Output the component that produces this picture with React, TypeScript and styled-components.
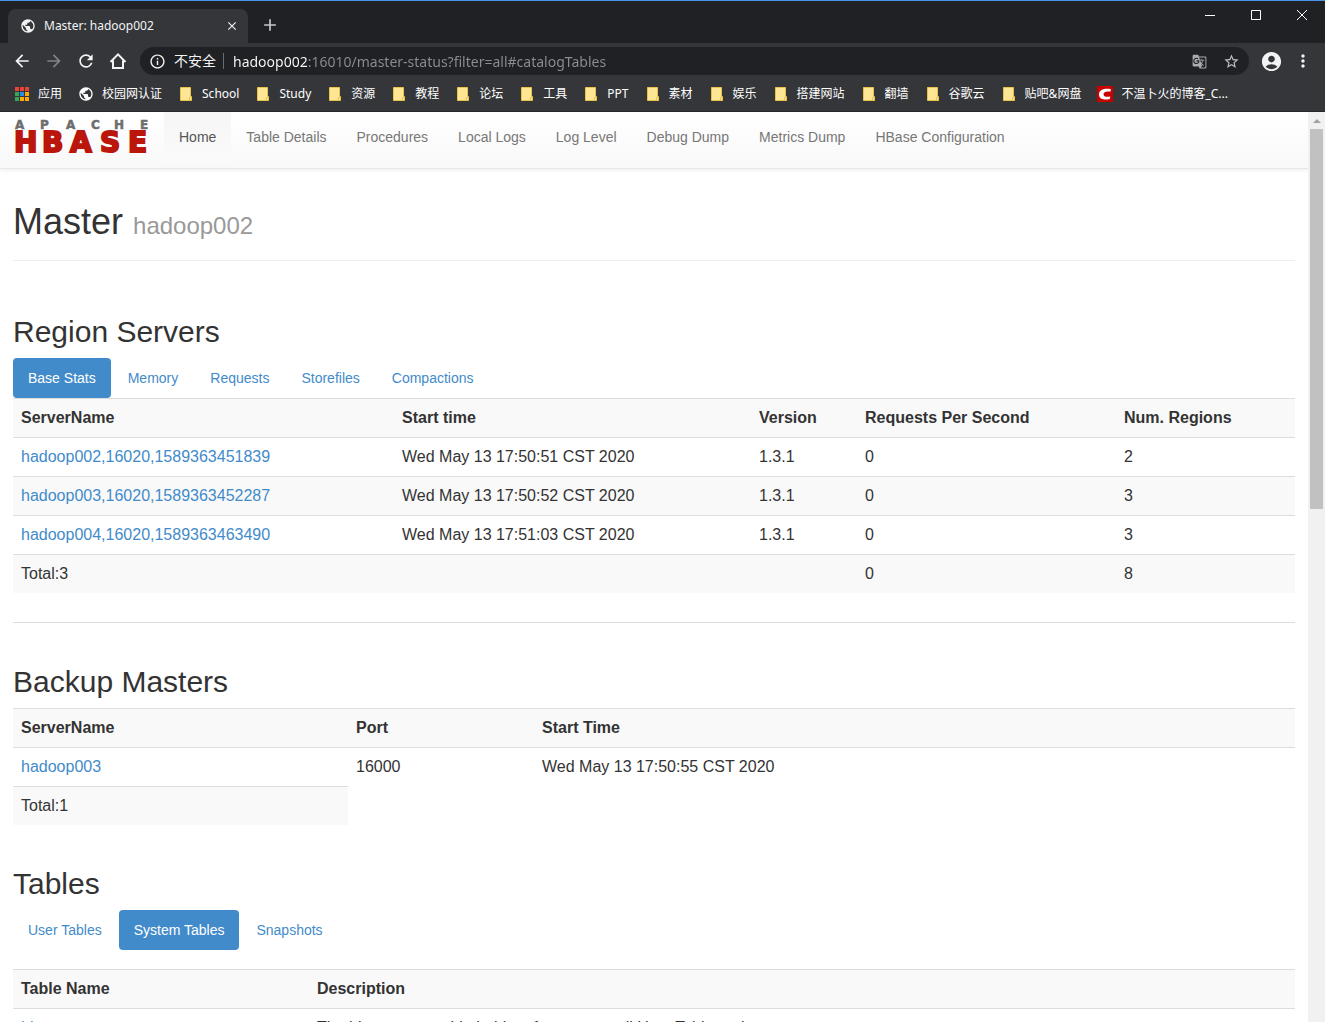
import React from "react";
import styled, { createGlobalStyle } from "styled-components";
import {
  MdAccountCircle,
  MdAdd,
  MdArrowBack,
  MdArrowForward,
  MdClose,
  MdGTranslate,
  MdInfoOutline,
  MdMoreVert,
  MdPublic,
  MdRefresh,
  MdStarBorder,
} from "react-icons/md";

const uiFont = '"Noto Sans", "Noto Sans CJK SC", sans-serif';
const pageFont = '"Liberation Sans", Arial, sans-serif';

const GlobalStyle = createGlobalStyle`
  *, *::before, *::after { box-sizing: border-box; }
  body { margin: 0; background: #fff; }
  button, input { font: inherit; border: 0; padding: 0; margin: 0; background: none; color: inherit; }
  a { text-decoration: none; color: inherit; }
  h1, h2 { margin: 0; font-weight: 400; }
`;

const Window = styled.div`
  display: flex;
  flex-direction: column;
  height: 100vh;
  overflow: hidden;
`;

/* ---------- browser frame ---------- */

const Chrome = styled.header`
  flex: none;
  background: #35363a;
  color: #f1f3f4;
  font-family: ${uiFont};
  font-size: 12px;
  line-height: 16px;
  border-bottom: 1px solid #27282b;
`;

const TabStrip = styled.div`
  display: flex;
  align-items: stretch;
  height: 43px;
  padding: 8px 0 0 8px;
  background: #202124;
  border-top: 1px solid #4a94e8;
`;

const BrowserTab = styled.div`
  display: flex;
  align-items: center;
  width: 240px;
  padding: 0 8px 0 12px;
  gap: 8px;
  background: #35363a;
  border-radius: 8px 8px 0 0;
`;

const TabTitle = styled.span`
  flex: 1;
  white-space: nowrap;
`;

const IconButton = styled.button<{ $size?: number; $tone?: string }>`
  display: grid;
  place-items: center;
  flex: none;
  width: ${(p) => p.$size ?? 32}px;
  height: ${(p) => p.$size ?? 32}px;
  color: ${(p) => p.$tone ?? "#f1f3f4"};
`;

const NewTab = styled(IconButton)`
  margin-left: 6px;
`;

const WindowControls = styled.div`
  display: flex;
  margin: -8px 0 0 auto;
`;

const WindowButton = styled.button`
  display: grid;
  place-items: center;
  width: 46px;
  height: 28px;
  color: #fff;
`;

const Toolbar = styled.div`
  display: flex;
  align-items: center;
  height: 36px;
  padding: 0 6px;
`;

const Omnibox = styled.div`
  display: flex;
  align-items: center;
  flex: 1;
  height: 28px;
  margin: 0 6px;
  padding: 0 2px 0 8px;
  border-radius: 14px;
  background: #202124;
  font-size: 14px;
`;

const SiteInfo = styled.button`
  display: flex;
  align-items: center;
  gap: 8px;
  height: 16px;
  padding: 0 7px 0 1px;
  border-right: 1px solid #6b6d70;
  color: #f1f3f4;
  white-space: nowrap;
`;

const Address = styled.input`
  flex: 1;
  min-width: 0;
  height: 24px;
  margin-left: 9px;
  color: transparent;
  background: linear-gradient(to right, #fff 75px, #8b8e92 75px);
  background-clip: text;
  -webkit-background-clip: text;
`;

const Bookmarks = styled.nav`
  display: flex;
  align-items: center;
  gap: 16px;
  height: 32px;
  padding: 0 14px 2px;
  white-space: nowrap;
`;

const Bookmark = styled.a`
  display: flex;
  align-items: center;
  gap: 8px;
  color: #fff;

  svg { flex: none; }
`;

/* ---------- page ---------- */

const Viewport = styled.div`
  display: flex;
  flex: 1;
  min-height: 0;
  font-family: ${pageFont};
  font-size: 16px;
  line-height: 22px;
  color: #333;
`;

const Page = styled.div`
  flex: 1;
  min-width: 0;
  overflow: hidden;
`;

const Navbar = styled.nav`
  display: flex;
  align-items: flex-start;
  height: 57px;
  background: linear-gradient(to bottom, #fff, #f8f8f8);
  border-bottom: 1px solid #e7e7e7;
  box-shadow: 0 1px 5px rgba(0, 0, 0, 0.08);
`;

const Brand = styled.a`
  display: block;
  width: 164px;
  height: 56px;
  padding: 6px 12px;
`;

const NavLink = styled.a<{ $active?: boolean }>`
  padding: 15px 15px;
  font-size: 14px;
  line-height: 20px;
  color: ${(p) => (p.$active ? "#555" : "#777")};
  background: ${(p) => (p.$active ? "linear-gradient(to bottom, #f6f6f6, #fafafa)" : "none")};
`;

const Container = styled.main`
  padding: 0 13px;
`;

const PageHeader = styled.div`
  padding: 33px 0 14px;
  border-bottom: 1px solid #eee;
`;

const Title = styled.h1`
  font-size: 36px;
  line-height: 40px;

  small { font-size: 24px; color: #999; }
`;

const Section = styled.section<{ $top: number }>`
  padding-top: ${(p) => p.$top}px;
`;

const Heading = styled.h2`
  margin-bottom: 10px;
  font-size: 30px;
  line-height: 33px;
`;

const Pills = styled.div<{ $bottom?: number }>`
  display: flex;
  gap: 2px;
  margin-bottom: ${(p) => p.$bottom ?? 0}px;
`;

const Pill = styled.a<{ $active?: boolean }>`
  padding: 10px 15px;
  border-radius: 4px;
  font-size: 14px;
  line-height: 20px;
  color: ${(p) => (p.$active ? "#fff" : "#428bca")};
  background: ${(p) => (p.$active ? "#428bca" : "none")};
`;

const Table = styled.table`
  width: 100%;
  table-layout: fixed;
  border-collapse: separate;
  border-spacing: 0;

  th, td {
    padding: 8px;
    border-top: 1px solid #ddd;
    text-align: left;
    white-space: nowrap;
  }
  tr:nth-child(odd) > th, tr:nth-child(odd) > td { background: #f9f9f9; }
  a { color: #428bca; }
`;

const Col = styled.col<{ $w?: number }>`
  width: ${(p) => (p.$w ? p.$w + "px" : "auto")};
`;

const Rule = styled.hr`
  margin: 29px 0 0;
  border: 0;
  border-top: 1px solid #ddd;
`;

const ScrollTrack = styled.div`
  display: flex;
  flex-direction: column;
  align-items: center;
  flex: none;
  width: 17px;
  background: #f1f1f1;
`;

const ScrollArrow = styled.div`
  display: grid;
  place-items: center;
  height: 17px;
`;

const ScrollThumb = styled.div`
  width: 13px;
  height: 380px;
  background: #c1c1c1;
`;

const Folder = () => (
  <svg width="16" height="16" viewBox="0 0 16 16" aria-hidden="true">
    <path d="M2.5 1.5h10v9h1v4h-11z" fill="#ffe694" stroke="#e8c24a" />
    <path d="M11.5 11v3" stroke="#e8c24a" />
  </svg>
);

const AppsGrid = () => {
  const colors = ["#ea4335", "#ea4335", "#ea4335", "#34a853", "#2a8cf0", "#fbab05", "#34a853", "#fbab05", "#fbab05"];
  return (
    <svg width="16" height="16" viewBox="0 0 16 16" aria-hidden="true">
      {colors.map((c, i) => (
        <rect key={i} x={1 + (i % 3) * 5} y={1 + Math.floor(i / 3) * 5} width="4" height="4" fill={c} />
      ))}
    </svg>
  );
};

const BlogIcon = () => (
  <svg width="16" height="16" viewBox="0 0 16 16" aria-hidden="true">
    <rect width="16" height="16" fill="#c80000" />
    <path
      d="M14 3.2C9.5 2.2 2 2.6 2 8.4c0 5.4 6.500 5.800 10.800 4.500l.5-2.500c-3 .8-6.800.8-6.800-2.200 0-3 4-3.200 6.900-2.400z"
      fill="#fff"
    />
  </svg>
);

const HouseIcon = () => (
  <svg width="20" height="20" viewBox="0 0 20 20" fill="none" stroke="currentColor" strokeWidth="2" aria-hidden="true">
    <path d="M2.500 11L10 3.400 17.500 11M5 9.500V17h10V9.500" />
  </svg>
);

const Logo = () => (
  <svg width="140" height="44" viewBox="0 0 140 44" role="img" aria-label="Apache HBase">
    <g fontFamily='"DejaVu Sans", sans-serif' fontWeight="700">
      <text x="3 28 54 79 102 128" y="11" fontSize="12" fill="#6d6d6d" stroke="#6d6d6d" strokeWidth="0.5">APACHE</text>
      <text x="2 30 58 88 116" y="34" fontSize="28" fill="#ba160c" stroke="#ba160c" strokeWidth="2">HBASE</text>
    </g>
  </svg>
);

const bookmarks: [string, string][] = [
  ["apps", "应用"],
  ["globe", "校园网认证"],
  ["folder", "School"],
  ["folder", "Study"],
  ["folder", "资源"],
  ["folder", "教程"],
  ["folder", "论坛"],
  ["folder", "工具"],
  ["folder", "PPT"],
  ["folder", "素材"],
  ["folder", "娱乐"],
  ["folder", "搭建网站"],
  ["folder", "翻墙"],
  ["folder", "谷歌云"],
  ["folder", "贴吧&网盘"],
  ["blog", "不温卜火的博客_C..."],
];

const bookmarkIcon = (kind: string) => {
  if (kind === "apps") return <AppsGrid />;
  if (kind === "globe") return <MdPublic size={16} />;
  if (kind === "blog") return <BlogIcon />;
  return <Folder />;
};

const navItems = [
  "Home",
  "Table Details",
  "Procedures",
  "Local Logs",
  "Log Level",
  "Debug Dump",
  "Metrics Dump",
  "HBase Configuration",
];

const servers = [
  ["hadoop002,16020,1589363451839", "Wed May 13 17:50:51 CST 2020", "1.3.1", "0", "2"],
  ["hadoop003,16020,1589363452287", "Wed May 13 17:50:52 CST 2020", "1.3.1", "0", "3"],
  ["hadoop004,16020,1589363463490", "Wed May 13 17:51:03 CST 2020", "1.3.1", "0", "3"],
];

const HeadRow = ({ labels }: { labels: string[] }) => (
  <tr>
    {labels.map((l) => (
      <th key={l} scope="col">{l}</th>
    ))}
  </tr>
);

const BrowserFrame = () => (
  <Chrome>
    <TabStrip>
      <BrowserTab>
        <MdPublic size={16} />
        <TabTitle>Master: hadoop002</TabTitle>
        <IconButton $size={16} aria-label="Close tab"><MdClose size={14} /></IconButton>
      </BrowserTab>
      <NewTab $tone="#c6c7c9" aria-label="New tab"><MdAdd size={20} /></NewTab>
      <WindowControls>
        <WindowButton aria-label="Minimize">
          <svg width="10" height="10"><path d="M0 5.5h10" stroke="#fff" /></svg>
        </WindowButton>
        <WindowButton aria-label="Maximize">
          <svg width="10" height="10"><path d="M.5 .5h9v9h-9z" stroke="#fff" fill="none" /></svg>
        </WindowButton>
        <WindowButton aria-label="Close">
          <svg width="10" height="10"><path d="M0 0l10 10M10 0L0 10" stroke="#fff" /></svg>
        </WindowButton>
      </WindowControls>
    </TabStrip>
    <Toolbar>
      <IconButton aria-label="Back"><MdArrowBack size={20} /></IconButton>
      <IconButton $tone="#818386" aria-label="Forward"><MdArrowForward size={20} /></IconButton>
      <IconButton aria-label="Reload"><MdRefresh size={20} /></IconButton>
      <IconButton aria-label="Home page"><HouseIcon /></IconButton>
      <Omnibox>
        <SiteInfo>
          <MdInfoOutline size={17} />
          不安全
        </SiteInfo>
        <Address aria-label="Address" defaultValue="hadoop002:16010/master-status?filter=all#catalogTables" />
        <IconButton $tone="#a9abae" aria-label="Translate"><MdGTranslate size={15} /></IconButton>
        <IconButton $tone="#bdc1c6" aria-label="Bookmark this page"><MdStarBorder size={17} /></IconButton>
      </Omnibox>
      <IconButton aria-label="Profile"><MdAccountCircle size={23} /></IconButton>
      <IconButton aria-label="Menu"><MdMoreVert size={20} /></IconButton>
    </Toolbar>
    <Bookmarks aria-label="Bookmarks">
      {bookmarks.map(([kind, label]) => (
        <Bookmark key={label} href="#">
          {bookmarkIcon(kind)}
          <span>{label}</span>
        </Bookmark>
      ))}
    </Bookmarks>
  </Chrome>
);

export default function App() {
  return (
    <Window>
      <GlobalStyle />
      <BrowserFrame />
      <Viewport>
        <Page>
          <Navbar>
            <Brand href="#"><Logo /></Brand>
            {navItems.map((item, i) => (
              <NavLink key={item} href="#" $active={i === 0}>{item}</NavLink>
            ))}
          </Navbar>
          <Container>
            <PageHeader>
              <Title>Master <small>hadoop002</small></Title>
            </PageHeader>

            <Section $top={54}>
              <Heading>Region Servers</Heading>
              <Pills>
                {["Base Stats", "Memory", "Requests", "Storefiles", "Compactions"].map((t, i) => (
                  <Pill key={t} href="#" $active={i === 0}>{t}</Pill>
                ))}
              </Pills>
              <Table>
                <colgroup>
                  <Col $w={381} /><Col $w={357} /><Col $w={106} /><Col $w={259} /><Col />
                </colgroup>
                <tbody>
                  <HeadRow labels={["ServerName", "Start time", "Version", "Requests Per Second", "Num. Regions"]} />
                  {servers.map(([name, ...rest]) => (
                    <tr key={name}>
                      <td><a href="#">{name}</a></td>
                      {rest.map((v, i) => <td key={i}>{v}</td>)}
                    </tr>
                  ))}
                  <tr>
                    <td>Total:3</td><td /><td /><td>0</td><td>8</td>
                  </tr>
                </tbody>
              </Table>
              <Rule />
            </Section>

            <Section $top={42}>
              <Heading>Backup Masters</Heading>
              <Table>
                <colgroup>
                  <Col $w={335} /><Col $w={186} /><Col />
                </colgroup>
                <tbody>
                  <HeadRow labels={["ServerName", "Port", "Start Time"]} />
                  <tr>
                    <td><a href="#">hadoop003</a></td>
                    <td>16000</td>
                    <td>Wed May 13 17:50:55 CST 2020</td>
                  </tr>
                  <tr><td>Total:1</td></tr>
                </tbody>
              </Table>
            </Section>

            <Section $top={42}>
              <Heading>Tables</Heading>
              <Pills $bottom={19}>
                {["User Tables", "System Tables", "Snapshots"].map((t, i) => (
                  <Pill key={t} href="#" $active={i === 1}>{t}</Pill>
                ))}
              </Pills>
              <Table>
                <colgroup>
                  <Col $w={296} /><Col />
                </colgroup>
                <tbody>
                  <HeadRow labels={["Table Name", "Description"]} />
                  <tr>
                    <td><a href="#">hbase:meta</a></td>
                    <td>The hbase:meta table holds references to all User Table regions</td>
                  </tr>
                </tbody>
              </Table>
            </Section>
          </Container>
        </Page>
        <ScrollTrack aria-hidden="true">
          <ScrollArrow>
            <svg width="8" height="4"><path d="M0 4L4 0l4 4z" fill="#a3a3a3" /></svg>
          </ScrollArrow>
          <ScrollThumb />
        </ScrollTrack>
      </Viewport>
    </Window>
  );
}
